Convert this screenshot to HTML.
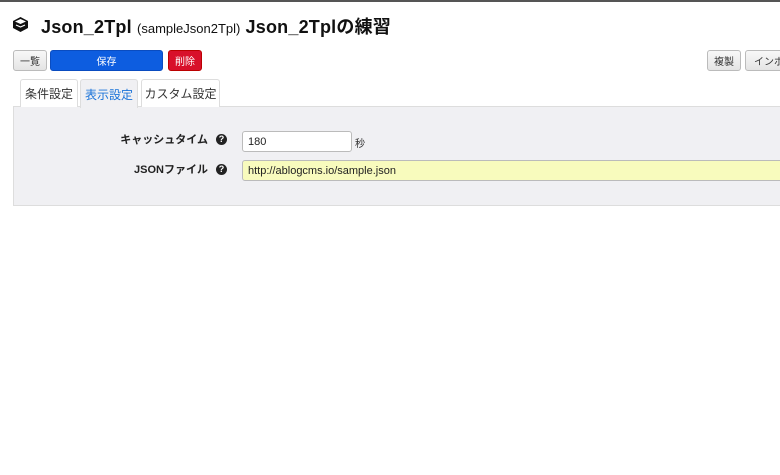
<!DOCTYPE html>
<html><head><meta charset="utf-8"><style>
body{margin:0;width:780px;height:475px;overflow:hidden;background:#fff;font-family:"Liberation Sans","Noto Sans CJK JP",sans-serif;position:relative}
.a{position:absolute}
.btn{position:absolute;top:50px;height:21px;box-sizing:border-box;border-radius:3px;font-size:10px;display:flex;align-items:center;justify-content:center;white-space:nowrap;overflow:hidden}
.g{background:linear-gradient(#f8f8f8,#e4e4e4);border:1px solid #bbb;color:#333}
.tab{position:absolute;top:79px;height:28px;box-sizing:border-box;border:1px solid #ddd;border-bottom:none;border-radius:3px 3px 0 0;font-size:12px;display:flex;align-items:center;justify-content:center;color:#333;background:#fff}
.q{position:absolute;width:11px;height:11px;border-radius:50%;background:#222;color:#fff;font-size:9px;font-weight:bold;text-align:center;line-height:11px}
.lbl{position:absolute;font-size:11px;font-weight:bold;color:#222;right:572px}
.in{position:absolute;box-sizing:border-box;border:1px solid #bbb;border-radius:3px;font-size:11px;padding-left:5px;display:flex;align-items:center;color:#222}
</style></head><body>
<div class="a" style="left:0;top:0;width:780px;height:2px;background:#555"></div>
<svg class="a" style="left:12px;top:16px" width="17" height="17" viewBox="0 0 17 17"><path d="M8.5 1 L16 5 L16 12 L8.5 16 L1 12 L1 5Z" fill="#111"/><path d="M3 5.5 L8.5 3 L14 5.5 L8.5 8Z" fill="#fff"/><path d="M4 9 L8.5 11 L13 9" stroke="#fff" stroke-width="1.2" fill="none"/></svg>
<div class="a" style="left:41px;top:13px;font-size:18px;font-weight:bold;color:#111;white-space:nowrap;letter-spacing:0.2px">Json_2Tpl <span style="font-size:13px;font-weight:normal;letter-spacing:0">(sampleJson2Tpl)</span> Json_2Tplの練習</div>
<div class="btn g" style="left:13px;width:34px">一覧</div>
<div class="btn" style="left:50px;width:113px;background:#0d5de0;border:1px solid #0a4cc0;color:#fff">保存</div>
<div class="btn" style="left:168px;width:34px;background:#d8102a;border:1px solid #b00;color:#fff">削除</div>
<div class="btn g" style="left:707px;width:34px">複製</div>
<div class="btn g" style="left:745px;width:50px;justify-content:flex-start;padding-left:8px">インポート</div>
<div class="a" style="left:13px;top:106px;width:780px;height:100px;box-sizing:border-box;background:#f0f0f3;border:1px solid #ddd"></div>
<div class="tab" style="left:20px;width:58px">条件設定</div>
<div class="tab" style="left:80px;width:58px;color:#1a73d9;background:#f0f0f3;height:29px">表示設定</div>
<div class="tab" style="left:141px;width:79px">カスタム設定</div>
<div class="lbl" style="top:131px">キャッシュタイム</div>
<div class="q" style="left:216px;top:134px">?</div>
<div class="in" style="left:242px;top:131px;width:110px;height:21px;background:#fff">180</div>
<div class="a" style="left:355px;top:135px;font-size:10px;color:#333">秒</div>
<div class="lbl" style="top:161px">JSONファイル</div>
<div class="q" style="left:216px;top:164px">?</div>
<div class="in" style="left:242px;top:160px;width:560px;height:21px;background:#f8fbbd">http://ablogcms.io/sample.json</div>
</body></html>
